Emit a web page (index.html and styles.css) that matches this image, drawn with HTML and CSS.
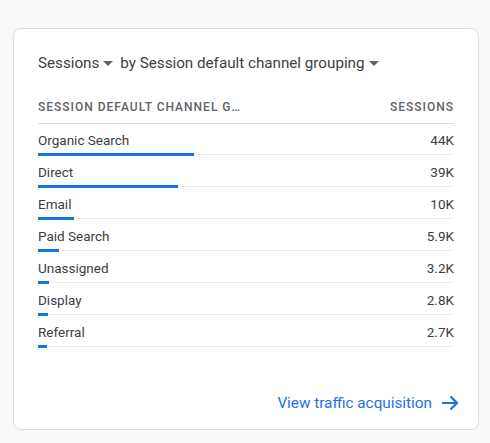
FILE: index.html
```html
<!DOCTYPE html>
<html>
<head>
<meta charset="utf-8">
<link rel="stylesheet" href="styles.css">
</head>
<body>
<div class="card">
  <div class="title">
    <span class="picker">Sessions <span class="caret"></span></span>
    <span class="picker">by Session default channel grouping <span class="caret"></span></span>
  </div>
  <div class="table">
    <div class="head">
      <span>Session default channel g…</span>
      <span>Sessions</span>
    </div>
    <div class="row"><div class="line"><span>Organic Search</span><span>44K</span></div><div class="track"><div class="bar" style="width:156px"></div></div></div>
    <div class="row"><div class="line"><span>Direct</span><span>39K</span></div><div class="track"><div class="bar" style="width:140px"></div></div></div>
    <div class="row"><div class="line"><span>Email</span><span>10K</span></div><div class="track"><div class="bar" style="width:36px"></div></div></div>
    <div class="row"><div class="line"><span>Paid Search</span><span>5.9K</span></div><div class="track"><div class="bar" style="width:21px"></div></div></div>
    <div class="row"><div class="line"><span>Unassigned</span><span>3.2K</span></div><div class="track"><div class="bar" style="width:11px"></div></div></div>
    <div class="row"><div class="line"><span>Display</span><span>2.8K</span></div><div class="track"><div class="bar" style="width:10px"></div></div></div>
    <div class="row"><div class="line"><span>Referral</span><span>2.7K</span></div><div class="track"><div class="bar" style="width:9px"></div></div></div>
  </div>
  <div class="footer">
    <a class="link">View traffic acquisition
      <svg width="20" height="20" viewBox="0 0 20 20"><path d="M2 10H17M10.5 3.5L17 10l-6.5 6.5" fill="none" stroke="#1a73e8" stroke-width="2.2"/></svg>
    </a>
  </div>
</div>
</body>
</html>
```
FILE: styles.css
```css
html, body { margin: 0; padding: 0; }
body {
  background: #f8f9fa;
  font-family: Roboto, "Liberation Sans", sans-serif;
  color: #3c4043;
}
.card {
  box-sizing: border-box;
  width: 466px;
  height: 402px;
  margin: 28px 0 0 13px;
  background: #fff;
  border: 1px solid #dadce0;
  border-radius: 8px;
  padding: 22px 24px 16px 24px;
  display: flex;
  flex-direction: column;
}
.title {
  display: flex;
  gap: 7px;
  font-size: 15.2px;
  line-height: 24px;
  color: #3c4043;
}
.picker { display: inline-flex; align-items: center; gap: 4px; }
.caret {
  width: 0; height: 0;
  border-left: 5px solid transparent;
  border-right: 5px solid transparent;
  border-top: 5px solid #5f6368;
}
.table { margin-top: 24px; }
.head {
  display: flex;
  justify-content: space-between;
  font-size: 12px;
  font-weight: 500;
  letter-spacing: 1px;
  text-transform: uppercase;
  color: #5f6368;
  line-height: 16px;
  padding-bottom: 8px;
  border-bottom: 1px solid #dadce0;
}
.row {
  box-sizing: border-box;
  height: 32px;
  padding-top: 6px;
  display: flex;
  flex-direction: column;
}
.line {
  display: flex;
  justify-content: space-between;
  font-size: 13.5px;
  line-height: 20px;
  color: #3c4043;
}
.track {
  margin-top: auto;
  margin-bottom: 1px;
  height: 1px;
  background: #e8eaed;
}
.bar {
  height: 3px;
  margin-top: -1px;
  background: #1a73e8;
}
.footer {
  margin-top: auto;
  display: flex;
  justify-content: flex-end;
  margin-right: -6px;
}
.link {
  display: inline-flex;
  align-items: center;
  gap: 8px;
  color: #1a73e8;
  font-size: 15.3px;
  line-height: 20px;
}
```
